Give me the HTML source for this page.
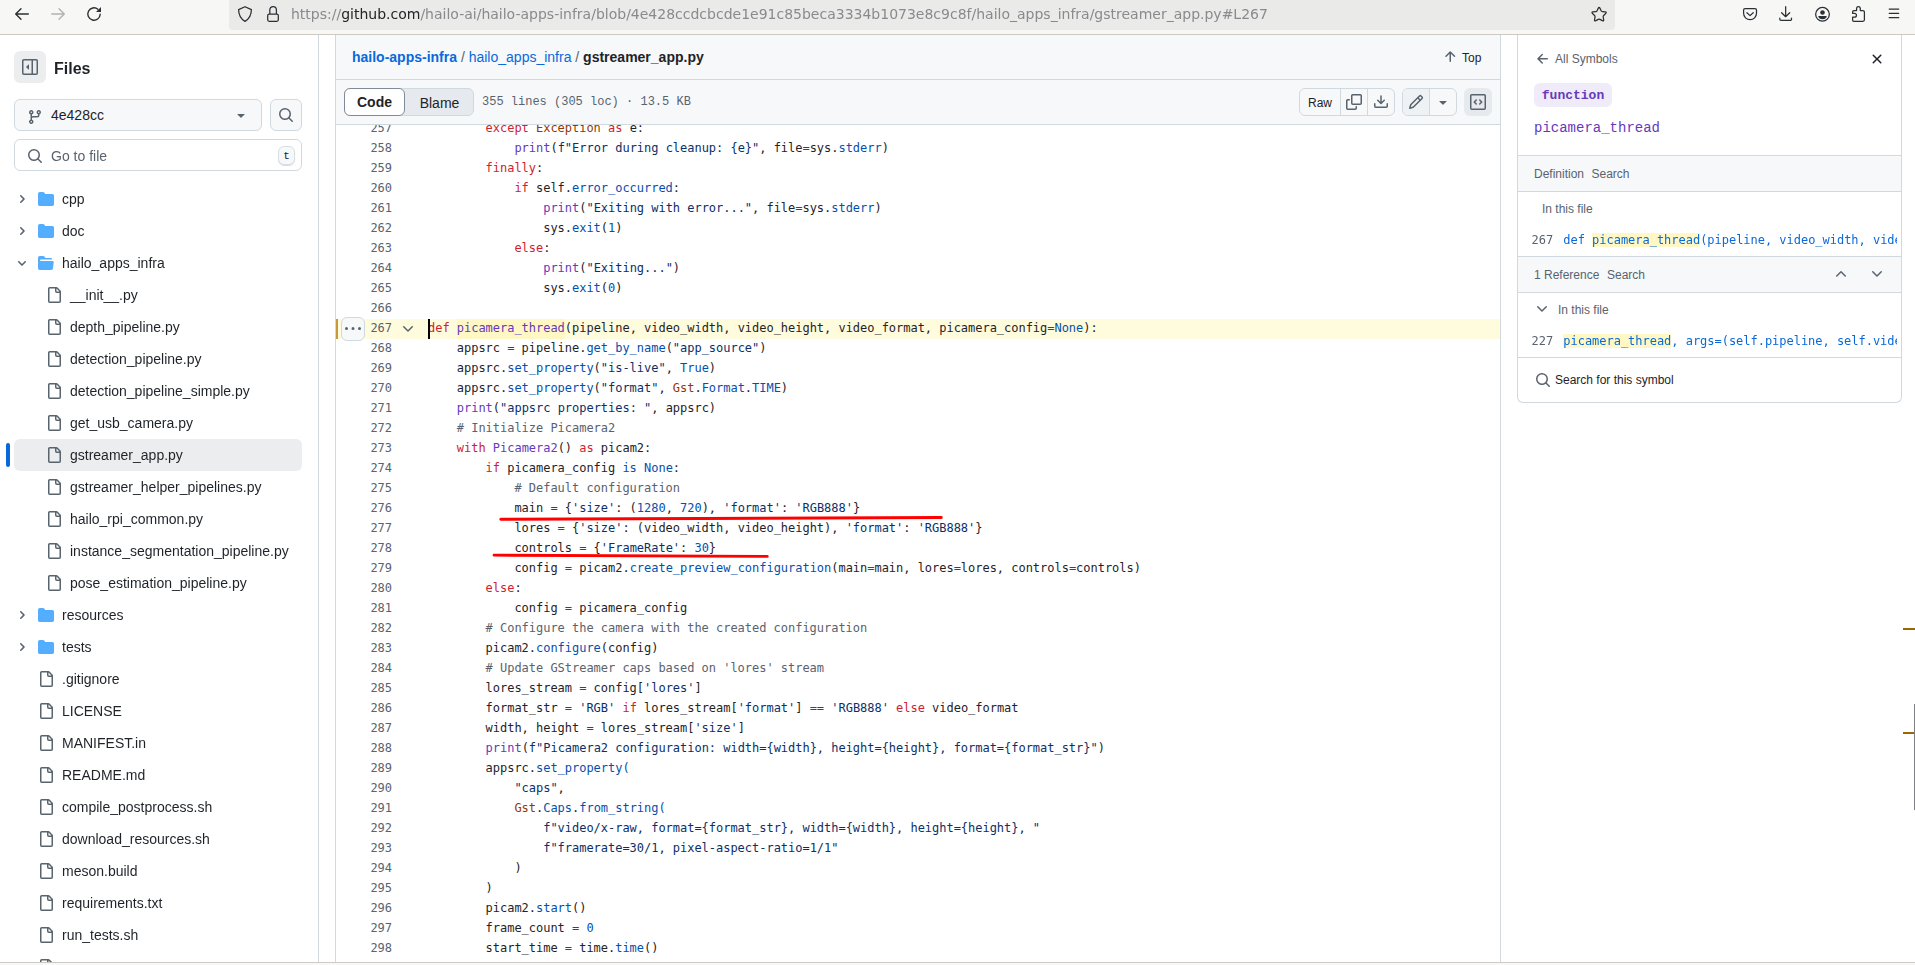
<!DOCTYPE html>
<html lang="en">
<head>
<meta charset="utf-8">
<title>hailo-apps-infra/hailo_apps_infra/gstreamer_app.py</title>
<style>
*{box-sizing:border-box;margin:0;padding:0}
html,body{width:1915px;height:965px;overflow:hidden;background:#fff}
body{position:relative;font-family:"Liberation Sans",Arial,sans-serif;font-size:14px;color:#1f2328}
.abs{position:absolute}
.gs{will-change:transform}
.ic{position:absolute;display:block;overflow:visible}
/* browser chrome */
#chrome{position:absolute;left:0;top:0;width:1915px;height:34px;background:#f7f7f5}
#chromeline{position:absolute;left:0;top:34px;width:1915px;height:1px;background:#cfc9c4}
#urlbar{position:absolute;left:229px;top:-4px;width:1386px;height:34px;border-radius:4px;background:#eaeae8}
#url{will-change:transform;position:absolute;left:290.500px;top:0;height:28px;line-height:28px;font-family:"DejaVu Sans",sans-serif;font-size:14px;color:#888a8e;white-space:nowrap;letter-spacing:-0.002px}
#url b{font-weight:normal;color:#222426}
#bottomline{position:absolute;left:0;top:962px;width:1915px;height:1px;background:#cfc9c4}
#bottomband{position:absolute;left:0;top:963px;width:1915px;height:2px;background:#f7f7f5}
/* sidebar */
#sideborder{position:absolute;left:318px;top:35px;width:1px;height:927px;background:#d1d9e0}
.tname{position:absolute;height:32px;line-height:32px;font-size:14px;color:#1f2328;white-space:nowrap}
.selrow{position:absolute;left:14px;width:288px;height:32px;border-radius:6px;background:#ecedef}
.selbar{position:absolute;left:6px;width:4px;height:24px;border-radius:6px;background:#0969da}
.btn{position:absolute;border:1px solid #d1d9e0;border-radius:6px;background:#f6f8fa}
/* main */
#main{position:absolute;left:335px;top:35px;width:1166px;height:927px;border-left:1px solid #d1d9e0;border-right:1px solid #d1d9e0;background:#fff}
#hdr1{position:absolute;left:0;top:0;width:1164px;height:45px;background:#f6f8fa;border-bottom:1px solid #d1d9e0}
#hdr2{position:absolute;left:0;top:45px;width:1164px;height:45px;background:#f6f8fa;border-bottom:1px solid #d1d9e0}
#codevp{position:absolute;left:336px;top:125px;width:1164px;height:837px;overflow:hidden;background:#fff}
.ln{position:absolute;left:0;width:1164px;height:20px;line-height:20px;font-family:"DejaVu Sans Mono",monospace;font-size:12px;white-space:pre;color:#1f2328;letter-spacing:-0.0244px}
.no{position:absolute;left:0;top:-1px;width:56px;text-align:right;color:#59636e}
.cd{position:absolute;left:92px;top:-1px;height:20px}
.hlrow{background:#fffbdd;box-shadow:inset 2px 0 0 #c69a3c}
.k{color:#cf222e}.f{color:#6639ba}.b{color:#0550ae}.s{color:#0a3069}.c{color:#59636e}.o{color:#953800}
.hl{background:#fff8c5}
.cd .hl{display:inline-block;height:20px;position:relative;top:1px;line-height:18px;vertical-align:top}
/* symbols */
#sym{position:absolute;left:1517px;top:35px;width:385px;height:368px;border:1px solid #d1d9e0;border-top:none;border-radius:0 0 6px 6px;background:#fff;overflow:hidden}
.band{position:absolute;left:0;width:383px;background:#f6f8fa;border-top:1px solid #d1d9e0;border-bottom:1px solid #d1d9e0}
.t12{position:absolute;font-size:12px;line-height:20px;height:20px;white-space:nowrap;color:#59636e}
.mono{font-family:"DejaVu Sans Mono",monospace}
.lmono{font-family:"Liberation Mono",monospace}
</style>
</head>
<body>
<!-- ===== browser chrome ===== -->
<div id="chrome">
  <div id="urlbar"></div>
  <svg class="ic" style="left:14px;top:6px;width:16px;height:16px" viewBox="0 0 16 16" fill="none" stroke="#2b3035" stroke-width="1.4" stroke-linecap="round" stroke-linejoin="round"><path d="M14.300 8.050H1.700M7 2.750 1.700 8.050 7 13.350"/></svg>
  <svg class="ic" style="left:50px;top:6px;width:16px;height:16px" viewBox="0 0 16 16" fill="none" stroke="#b3b3b1" stroke-width="1.4" stroke-linecap="round" stroke-linejoin="round"><path d="M1.700 8.050h12.600M9 2.750 14.300 8.050 9 13.350"/></svg>
  <svg class="ic" style="left:86px;top:6px;width:16px;height:16px" viewBox="0 0 16 16" fill="none" stroke="#2b3035" stroke-width="1.4" stroke-linecap="round"><path d="M14.2 8.3a6.2 6.2 0 1 1-2.3-5.1"/><path d="M15 1v5h-5z" fill="#2b3035" stroke="none"/></svg>
  <svg class="ic" style="left:237px;top:6px;width:16px;height:16px" viewBox="0 0 16 16" fill="none" stroke="#2b3035" stroke-width="1.250" stroke-linejoin="round"><path d="M8 .700 14.400 3.600C14.400 8.800 12.200 13 8 15.400 3.800 13 1.600 8.800 1.600 3.600Z"/></svg>
  <svg class="ic" style="left:265px;top:6px;width:16px;height:16px" viewBox="0 0 16 16" fill="none" stroke="#2b3035" stroke-width="1.250" stroke-linejoin="round"><rect x="2.700" y="8.100" width="10.600" height="7.200" rx="1.500"/><path d="M4.800 8V3.900a3.300 3.300 0 0 1 6.600 0V8"/></svg>
  <div id="url">https://<b>github.com</b>/hailo-ai/hailo-apps-infra/blob/4e428ccdcbcde1e91c85beca3334b1073e8c9c8f/hailo_apps_infra/gstreamer_app.py#L267</div>
  <svg class="ic" style="left:1590px;top:5px;width:18px;height:18px" viewBox="0 0 18 18" fill="none" stroke="#2b3035" stroke-width="1.250" stroke-linejoin="round"><path d="M8.32 3.12Q9.10 1.50 9.88 3.12L11.12 5.67Q11.51 6.48 12.40 6.61L15.21 6.99Q16.99 7.24 15.69 8.48L13.65 10.44Q13.00 11.07 13.16 11.95L13.66 14.74Q13.98 16.51 12.39 15.66L9.89 14.33Q9.10 13.90 8.31 14.33L5.81 15.66Q4.22 16.51 4.54 14.74L5.04 11.95Q5.20 11.07 4.55 10.44L2.51 8.48Q1.21 7.24 2.99 6.99L5.80 6.61Q6.69 6.48 7.08 5.67Z"/></svg>
  <svg class="ic" style="left:1742px;top:6px;width:16px;height:16px" viewBox="0 0 16 16" fill="none" stroke="#2b3035" stroke-width="1.250" stroke-linecap="round" stroke-linejoin="round"><path d="M3.100 2.600h9.900a1.500 1.500 0 0 1 1.500 1.500v3.200a6.450 6.450 0 0 1-12.900 0V4.100a1.500 1.500 0 0 1 1.500-1.500Z"/><path d="M4.900 6.700 8.050 9.600 11.200 6.700"/></svg>
  <svg class="ic" style="left:1778px;top:6px;width:16px;height:16px" viewBox="0 0 16 16" fill="none" stroke="#2b3035" stroke-width="1.250" stroke-linecap="round" stroke-linejoin="round"><path d="M7.650 .700v10M3.600 6.700 7.650 10.700 11.700 6.700M1.800 12.100v1.100a1.200 1.200 0 0 0 1.200 1.200h9.300a1.200 1.200 0 0 0 1.200-1.200v-1.100"/></svg>
  <svg class="ic" style="left:1814px;top:6px;width:17px;height:17px" viewBox="0 0 17 17" fill="none" stroke="#2b3035" stroke-width="1.250"><circle cx="8.500" cy="8.300" r="6.850"/><circle cx="8.500" cy="6.450" r="2.300" fill="#2b3035" stroke="none"/><path d="M4.300 10.100h8.400a4.200 3.100 0 0 1-8.400 0Z" fill="#2b3035" stroke="none"/></svg>
  <svg class="ic" style="left:1845px;top:2px;width:28px;height:24px" viewBox="0 0 28 24" fill="none" stroke="#2b3035" stroke-width="1.250" stroke-linejoin="round"><path d="M11.570 8.600V6.370A1.870 1.870 0 0 1 15.300 6.370V8.600H17.900A1.500 1.500 0 0 1 19.400 10.100V17.800A1.500 1.500 0 0 1 17.900 19.300H8.900A1.300 1.300 0 0 1 7.600 18V15.200H9.500A1.950 1.950 0 0 0 9.500 11.300H7.600V9.900A1.300 1.300 0 0 1 8.900 8.600Z"/></svg>
  <svg class="ic" style="left:1886px;top:6px;width:16px;height:16px" viewBox="0 0 16 16" fill="none" stroke="#2b3035" stroke-width="1.250" stroke-linecap="round"><path d="M3.200 3h9.500M3.200 7.350h9.500M3.200 11.650h9.500"/></svg>
</div>
<div id="chromeline"></div>

<!-- ===== file tree sidebar ===== -->
<div id="sideborder"></div>
<div class="abs" style="left:14px;top:51px;width:32px;height:32px;border-radius:6px;background:#ecedef"></div>
<svg class="ic" style="left:22px;top:59px;width:16px;height:16px;fill:#59636e;" viewBox="0 0 16 16"><path d="m4.177 7.823 2.396-2.396A.25.25 0 0 1 7 5.604v4.792a.25.25 0 0 1-.427.177L4.177 8.177a.25.25 0 0 1 0-.354Z"/><path d="M0 1.75C0 .784.784 0 1.75 0h12.5C15.216 0 16 .784 16 1.75v12.5A1.75 1.75 0 0 1 14.25 16H1.75A1.75 1.75 0 0 1 0 14.25Zm1.75-.25a.25.25 0 0 0-.25.25v12.5c0 .138.112.25.25.25H9.5v-13Zm12.5 13a.25.25 0 0 0 .25-.25V1.75a.25.25 0 0 0-.25-.25H11v13Z"/></svg>
<div class="abs gs" style="left:54px;top:57px;height:24px;line-height:24px;font-size:16px;font-weight:bold;color:#1f2328">Files</div>
<div class="btn" style="left:14px;top:99px;width:248px;height:32px"></div>
<svg class="ic" style="left:27px;top:108.500px;width:16px;height:16px;fill:#59636e;" viewBox="0 0 16 16"><path d="M9.5 3.25a2.25 2.25 0 1 1 3 2.122V6A2.5 2.5 0 0 1 10 8.5H6a1 1 0 0 0-1 1v1.128a2.251 2.251 0 1 1-1.5 0V5.372a2.25 2.25 0 1 1 1.5 0v1.836A2.493 2.493 0 0 1 6 7h4a1 1 0 0 0 1-1v-.628A2.25 2.25 0 0 1 9.5 3.25Zm-6 0a.75.75 0 1 0 1.5 0 .75.75 0 0 0-1.5 0Zm8.25-.75a.75.75 0 1 0 0 1.5.75.75 0 0 0 0-1.5ZM4.25 12a.75.75 0 1 0 0 1.5.75.75 0 0 0 0-1.5Z"/></svg>
<div class="abs" style="left:51px;top:99px;height:32px;line-height:32px;font-size:14px;color:#1f2328">4e428cc</div>
<svg class="ic" style="left:233px;top:107px;width:16px;height:16px;fill:#59636e;" viewBox="0 0 16 16"><path d="m4.427 7.427 3.396 3.396a.25.25 0 0 0 .354 0l3.396-3.396A.25.25 0 0 0 11.396 7H4.604a.25.25 0 0 0-.177.427Z"/></svg>
<div class="btn" style="left:270px;top:99px;width:32px;height:32px"></div>
<svg class="ic" style="left:278px;top:107px;width:16px;height:16px;fill:#59636e;" viewBox="0 0 16 16"><path d="M10.68 11.74a6 6 0 0 1-7.922-8.982 6 6 0 0 1 8.982 7.922l3.04 3.04a.749.749 0 0 1-.326 1.275.749.749 0 0 1-.734-.215ZM11.5 7a4.499 4.499 0 1 0-8.997 0A4.499 4.499 0 0 0 11.5 7Z"/></svg>
<div class="abs" style="left:14px;top:139px;width:288px;height:32px;border:1px solid #d1d9e0;border-radius:6px;background:#fff"></div>
<svg class="ic" style="left:27px;top:148px;width:16px;height:16px;fill:#59636e;" viewBox="0 0 16 16"><path d="M10.68 11.74a6 6 0 0 1-7.922-8.982 6 6 0 0 1 8.982 7.922l3.04 3.04a.749.749 0 0 1-.326 1.275.749.749 0 0 1-.734-.215ZM11.5 7a4.499 4.499 0 1 0-8.997 0A4.499 4.499 0 0 0 11.5 7Z"/></svg>
<div class="abs gs" style="left:51px;top:140px;height:32px;line-height:32px;font-size:14px;color:#59636e">Go to file</div>
<div class="abs lmono" style="left:278px;top:146px;width:17px;height:20px;border:1px solid #d8dee4;border-radius:6px;background:#f6f8fa;box-shadow:inset 0 -1px 0 #d8dee4;font-size:11px;line-height:18px;text-align:center;color:#1f2328">t</div>
<div class="abs gs" style="left:0;top:175px;width:318px;height:787px;overflow:hidden"><div class="abs" style="left:0;top:-175px;width:318px;height:965px">
<svg class="ic" style="left:16px;top:193px;width:12px;height:12px;fill:#59636e;" viewBox="0 0 12 12"><path d="M4.7 10c-.2 0-.4-.1-.5-.2-.3-.3-.3-.8 0-1.1L6.9 6 4.2 3.3c-.3-.3-.3-.8 0-1.1.3-.3.8-.3 1.1 0l3.3 3.2c.3.3.3.8 0 1.1L5.3 9.7c-.2.2-.4.3-.6.3Z"/></svg><svg class="ic" style="left:38px;top:191px;width:16px;height:16px;fill:#54aeff;" viewBox="0 0 16 16"><path d="M1.75 1A1.75 1.75 0 0 0 0 2.75v10.5C0 14.216.784 15 1.75 15h12.5A1.75 1.75 0 0 0 16 13.25v-8.5A1.75 1.75 0 0 0 14.25 3H7.5a.25.25 0 0 1-.2-.1l-.9-1.2C6.07 1.26 5.55 1 5 1H1.75Z"/></svg><div class="tname" style="left:62px;top:183px">cpp</div>
<svg class="ic" style="left:16px;top:225px;width:12px;height:12px;fill:#59636e;" viewBox="0 0 12 12"><path d="M4.7 10c-.2 0-.4-.1-.5-.2-.3-.3-.3-.8 0-1.1L6.9 6 4.2 3.3c-.3-.3-.3-.8 0-1.1.3-.3.8-.3 1.1 0l3.3 3.2c.3.3.3.8 0 1.1L5.3 9.7c-.2.2-.4.3-.6.3Z"/></svg><svg class="ic" style="left:38px;top:223px;width:16px;height:16px;fill:#54aeff;" viewBox="0 0 16 16"><path d="M1.75 1A1.75 1.75 0 0 0 0 2.75v10.5C0 14.216.784 15 1.75 15h12.5A1.75 1.75 0 0 0 16 13.25v-8.5A1.75 1.75 0 0 0 14.25 3H7.5a.25.25 0 0 1-.2-.1l-.9-1.2C6.07 1.26 5.55 1 5 1H1.75Z"/></svg><div class="tname" style="left:62px;top:215px">doc</div>
<svg class="ic" style="left:16px;top:257px;width:12px;height:12px;fill:#59636e;" viewBox="0 0 12 12"><path d="M6 8.825c-.2 0-.4-.1-.5-.2l-3.3-3.3c-.3-.3-.3-.8 0-1.1.3-.3.8-.3 1.1 0l2.7 2.7 2.7-2.7c.3-.3.8-.3 1.1 0 .3.3.3.8 0 1.1l-3.2 3.2c-.2.2-.4.3-.6.3Z"/></svg><svg class="ic" style="left:38px;top:255px;width:16px;height:16px;fill:#54aeff;" viewBox="0 0 16 16"><path d="M.513 1.513A1.75 1.75 0 0 1 1.75 1h3.5c.55 0 1.07.26 1.4.7l.9 1.2a.25.25 0 0 0 .2.1H13a1 1 0 0 1 1 1v.5H2.75a.75.75 0 0 0 0 1.5h11.978a1 1 0 0 1 .994 1.117L15 13.25A1.75 1.75 0 0 1 13.25 15H1.75A1.75 1.75 0 0 1 0 13.25V2.75c0-.464.184-.91.513-1.237Z"/></svg><div class="tname" style="left:62px;top:247px">hailo_apps_infra</div>
<svg class="ic" style="left:46px;top:287px;width:16px;height:16px;fill:#59636e;" viewBox="0 0 16 16"><path d="M2 1.75C2 .784 2.784 0 3.75 0h6.586c.464 0 .909.184 1.237.513l2.914 2.914c.329.328.513.773.513 1.237v9.586A1.75 1.75 0 0 1 13.25 16h-9.5A1.75 1.75 0 0 1 2 14.25Zm1.75-.25a.25.25 0 0 0-.25.25v12.5c0 .138.112.25.25.25h9.5a.25.25 0 0 0 .25-.25V6h-2.75A1.75 1.75 0 0 1 9 4.25V1.5Zm6.75.062V4.25c0 .138.112.25.25.25h2.688l-.011-.013-2.914-2.914-.013-.011Z"/></svg><div class="tname" style="left:70px;top:279px">__init__.py</div>
<svg class="ic" style="left:46px;top:319px;width:16px;height:16px;fill:#59636e;" viewBox="0 0 16 16"><path d="M2 1.75C2 .784 2.784 0 3.75 0h6.586c.464 0 .909.184 1.237.513l2.914 2.914c.329.328.513.773.513 1.237v9.586A1.75 1.75 0 0 1 13.25 16h-9.5A1.75 1.75 0 0 1 2 14.25Zm1.75-.25a.25.25 0 0 0-.25.25v12.5c0 .138.112.25.25.25h9.5a.25.25 0 0 0 .25-.25V6h-2.75A1.75 1.75 0 0 1 9 4.25V1.5Zm6.75.062V4.25c0 .138.112.25.25.25h2.688l-.011-.013-2.914-2.914-.013-.011Z"/></svg><div class="tname" style="left:70px;top:311px">depth_pipeline.py</div>
<svg class="ic" style="left:46px;top:351px;width:16px;height:16px;fill:#59636e;" viewBox="0 0 16 16"><path d="M2 1.75C2 .784 2.784 0 3.75 0h6.586c.464 0 .909.184 1.237.513l2.914 2.914c.329.328.513.773.513 1.237v9.586A1.75 1.75 0 0 1 13.25 16h-9.5A1.75 1.75 0 0 1 2 14.25Zm1.75-.25a.25.25 0 0 0-.25.25v12.5c0 .138.112.25.25.25h9.5a.25.25 0 0 0 .25-.25V6h-2.75A1.75 1.75 0 0 1 9 4.25V1.5Zm6.75.062V4.25c0 .138.112.25.25.25h2.688l-.011-.013-2.914-2.914-.013-.011Z"/></svg><div class="tname" style="left:70px;top:343px">detection_pipeline.py</div>
<svg class="ic" style="left:46px;top:383px;width:16px;height:16px;fill:#59636e;" viewBox="0 0 16 16"><path d="M2 1.75C2 .784 2.784 0 3.75 0h6.586c.464 0 .909.184 1.237.513l2.914 2.914c.329.328.513.773.513 1.237v9.586A1.75 1.75 0 0 1 13.25 16h-9.5A1.75 1.75 0 0 1 2 14.25Zm1.75-.25a.25.25 0 0 0-.25.25v12.5c0 .138.112.25.25.25h9.5a.25.25 0 0 0 .25-.25V6h-2.75A1.75 1.75 0 0 1 9 4.25V1.5Zm6.75.062V4.25c0 .138.112.25.25.25h2.688l-.011-.013-2.914-2.914-.013-.011Z"/></svg><div class="tname" style="left:70px;top:375px">detection_pipeline_simple.py</div>
<svg class="ic" style="left:46px;top:415px;width:16px;height:16px;fill:#59636e;" viewBox="0 0 16 16"><path d="M2 1.75C2 .784 2.784 0 3.75 0h6.586c.464 0 .909.184 1.237.513l2.914 2.914c.329.328.513.773.513 1.237v9.586A1.75 1.75 0 0 1 13.25 16h-9.5A1.75 1.75 0 0 1 2 14.25Zm1.75-.25a.25.25 0 0 0-.25.25v12.5c0 .138.112.25.25.25h9.5a.25.25 0 0 0 .25-.25V6h-2.75A1.75 1.75 0 0 1 9 4.25V1.5Zm6.75.062V4.25c0 .138.112.25.25.25h2.688l-.011-.013-2.914-2.914-.013-.011Z"/></svg><div class="tname" style="left:70px;top:407px">get_usb_camera.py</div>
<div class="selrow" style="top:439px"></div><div class="selbar" style="top:443px"></div><svg class="ic" style="left:46px;top:447px;width:16px;height:16px;fill:#59636e;" viewBox="0 0 16 16"><path d="M2 1.75C2 .784 2.784 0 3.75 0h6.586c.464 0 .909.184 1.237.513l2.914 2.914c.329.328.513.773.513 1.237v9.586A1.75 1.75 0 0 1 13.25 16h-9.5A1.75 1.75 0 0 1 2 14.25Zm1.75-.25a.25.25 0 0 0-.25.25v12.5c0 .138.112.25.25.25h9.5a.25.25 0 0 0 .25-.25V6h-2.75A1.75 1.75 0 0 1 9 4.25V1.5Zm6.75.062V4.25c0 .138.112.25.25.25h2.688l-.011-.013-2.914-2.914-.013-.011Z"/></svg><div class="tname" style="left:70px;top:439px">gstreamer_app.py</div>
<svg class="ic" style="left:46px;top:479px;width:16px;height:16px;fill:#59636e;" viewBox="0 0 16 16"><path d="M2 1.75C2 .784 2.784 0 3.75 0h6.586c.464 0 .909.184 1.237.513l2.914 2.914c.329.328.513.773.513 1.237v9.586A1.75 1.75 0 0 1 13.25 16h-9.5A1.75 1.75 0 0 1 2 14.25Zm1.75-.25a.25.25 0 0 0-.25.25v12.5c0 .138.112.25.25.25h9.5a.25.25 0 0 0 .25-.25V6h-2.75A1.75 1.75 0 0 1 9 4.25V1.5Zm6.75.062V4.25c0 .138.112.25.25.25h2.688l-.011-.013-2.914-2.914-.013-.011Z"/></svg><div class="tname" style="left:70px;top:471px">gstreamer_helper_pipelines.py</div>
<svg class="ic" style="left:46px;top:511px;width:16px;height:16px;fill:#59636e;" viewBox="0 0 16 16"><path d="M2 1.75C2 .784 2.784 0 3.75 0h6.586c.464 0 .909.184 1.237.513l2.914 2.914c.329.328.513.773.513 1.237v9.586A1.75 1.75 0 0 1 13.25 16h-9.5A1.75 1.75 0 0 1 2 14.25Zm1.75-.25a.25.25 0 0 0-.25.25v12.5c0 .138.112.25.25.25h9.5a.25.25 0 0 0 .25-.25V6h-2.75A1.75 1.75 0 0 1 9 4.25V1.5Zm6.75.062V4.25c0 .138.112.25.25.25h2.688l-.011-.013-2.914-2.914-.013-.011Z"/></svg><div class="tname" style="left:70px;top:503px">hailo_rpi_common.py</div>
<svg class="ic" style="left:46px;top:543px;width:16px;height:16px;fill:#59636e;" viewBox="0 0 16 16"><path d="M2 1.75C2 .784 2.784 0 3.75 0h6.586c.464 0 .909.184 1.237.513l2.914 2.914c.329.328.513.773.513 1.237v9.586A1.75 1.75 0 0 1 13.25 16h-9.5A1.75 1.75 0 0 1 2 14.25Zm1.75-.25a.25.25 0 0 0-.25.25v12.5c0 .138.112.25.25.25h9.5a.25.25 0 0 0 .25-.25V6h-2.75A1.75 1.75 0 0 1 9 4.25V1.5Zm6.75.062V4.25c0 .138.112.25.25.25h2.688l-.011-.013-2.914-2.914-.013-.011Z"/></svg><div class="tname" style="left:70px;top:535px">instance_segmentation_pipeline.py</div>
<svg class="ic" style="left:46px;top:575px;width:16px;height:16px;fill:#59636e;" viewBox="0 0 16 16"><path d="M2 1.75C2 .784 2.784 0 3.75 0h6.586c.464 0 .909.184 1.237.513l2.914 2.914c.329.328.513.773.513 1.237v9.586A1.75 1.75 0 0 1 13.25 16h-9.5A1.75 1.75 0 0 1 2 14.25Zm1.75-.25a.25.25 0 0 0-.25.25v12.5c0 .138.112.25.25.25h9.5a.25.25 0 0 0 .25-.25V6h-2.75A1.75 1.75 0 0 1 9 4.25V1.5Zm6.75.062V4.25c0 .138.112.25.25.25h2.688l-.011-.013-2.914-2.914-.013-.011Z"/></svg><div class="tname" style="left:70px;top:567px">pose_estimation_pipeline.py</div>
<svg class="ic" style="left:16px;top:609px;width:12px;height:12px;fill:#59636e;" viewBox="0 0 12 12"><path d="M4.7 10c-.2 0-.4-.1-.5-.2-.3-.3-.3-.8 0-1.1L6.9 6 4.2 3.3c-.3-.3-.3-.8 0-1.1.3-.3.8-.3 1.1 0l3.3 3.2c.3.3.3.8 0 1.1L5.3 9.7c-.2.2-.4.3-.6.3Z"/></svg><svg class="ic" style="left:38px;top:607px;width:16px;height:16px;fill:#54aeff;" viewBox="0 0 16 16"><path d="M1.75 1A1.75 1.75 0 0 0 0 2.75v10.5C0 14.216.784 15 1.75 15h12.5A1.75 1.75 0 0 0 16 13.25v-8.5A1.75 1.75 0 0 0 14.25 3H7.5a.25.25 0 0 1-.2-.1l-.9-1.2C6.07 1.26 5.55 1 5 1H1.75Z"/></svg><div class="tname" style="left:62px;top:599px">resources</div>
<svg class="ic" style="left:16px;top:641px;width:12px;height:12px;fill:#59636e;" viewBox="0 0 12 12"><path d="M4.7 10c-.2 0-.4-.1-.5-.2-.3-.3-.3-.8 0-1.1L6.9 6 4.2 3.3c-.3-.3-.3-.8 0-1.1.3-.3.8-.3 1.1 0l3.3 3.2c.3.3.3.8 0 1.1L5.3 9.7c-.2.2-.4.3-.6.3Z"/></svg><svg class="ic" style="left:38px;top:639px;width:16px;height:16px;fill:#54aeff;" viewBox="0 0 16 16"><path d="M1.75 1A1.75 1.75 0 0 0 0 2.75v10.5C0 14.216.784 15 1.75 15h12.5A1.75 1.75 0 0 0 16 13.25v-8.5A1.75 1.75 0 0 0 14.25 3H7.5a.25.25 0 0 1-.2-.1l-.9-1.2C6.07 1.26 5.55 1 5 1H1.75Z"/></svg><div class="tname" style="left:62px;top:631px">tests</div>
<svg class="ic" style="left:38px;top:671px;width:16px;height:16px;fill:#59636e;" viewBox="0 0 16 16"><path d="M2 1.75C2 .784 2.784 0 3.75 0h6.586c.464 0 .909.184 1.237.513l2.914 2.914c.329.328.513.773.513 1.237v9.586A1.75 1.75 0 0 1 13.25 16h-9.5A1.75 1.75 0 0 1 2 14.25Zm1.75-.25a.25.25 0 0 0-.25.25v12.5c0 .138.112.25.25.25h9.5a.25.25 0 0 0 .25-.25V6h-2.75A1.75 1.75 0 0 1 9 4.25V1.5Zm6.75.062V4.25c0 .138.112.25.25.25h2.688l-.011-.013-2.914-2.914-.013-.011Z"/></svg><div class="tname" style="left:62px;top:663px">.gitignore</div>
<svg class="ic" style="left:38px;top:703px;width:16px;height:16px;fill:#59636e;" viewBox="0 0 16 16"><path d="M2 1.75C2 .784 2.784 0 3.75 0h6.586c.464 0 .909.184 1.237.513l2.914 2.914c.329.328.513.773.513 1.237v9.586A1.75 1.75 0 0 1 13.25 16h-9.5A1.75 1.75 0 0 1 2 14.25Zm1.75-.25a.25.25 0 0 0-.25.25v12.5c0 .138.112.25.25.25h9.5a.25.25 0 0 0 .25-.25V6h-2.75A1.75 1.75 0 0 1 9 4.25V1.5Zm6.75.062V4.25c0 .138.112.25.25.25h2.688l-.011-.013-2.914-2.914-.013-.011Z"/></svg><div class="tname" style="left:62px;top:695px">LICENSE</div>
<svg class="ic" style="left:38px;top:735px;width:16px;height:16px;fill:#59636e;" viewBox="0 0 16 16"><path d="M2 1.75C2 .784 2.784 0 3.75 0h6.586c.464 0 .909.184 1.237.513l2.914 2.914c.329.328.513.773.513 1.237v9.586A1.75 1.75 0 0 1 13.25 16h-9.5A1.75 1.75 0 0 1 2 14.25Zm1.75-.25a.25.25 0 0 0-.25.25v12.5c0 .138.112.25.25.25h9.5a.25.25 0 0 0 .25-.25V6h-2.75A1.75 1.75 0 0 1 9 4.25V1.5Zm6.75.062V4.25c0 .138.112.25.25.25h2.688l-.011-.013-2.914-2.914-.013-.011Z"/></svg><div class="tname" style="left:62px;top:727px">MANIFEST.in</div>
<svg class="ic" style="left:38px;top:767px;width:16px;height:16px;fill:#59636e;" viewBox="0 0 16 16"><path d="M2 1.75C2 .784 2.784 0 3.75 0h6.586c.464 0 .909.184 1.237.513l2.914 2.914c.329.328.513.773.513 1.237v9.586A1.75 1.75 0 0 1 13.25 16h-9.5A1.75 1.75 0 0 1 2 14.25Zm1.75-.25a.25.25 0 0 0-.25.25v12.5c0 .138.112.25.25.25h9.5a.25.25 0 0 0 .25-.25V6h-2.75A1.75 1.75 0 0 1 9 4.25V1.5Zm6.75.062V4.25c0 .138.112.25.25.25h2.688l-.011-.013-2.914-2.914-.013-.011Z"/></svg><div class="tname" style="left:62px;top:759px">README.md</div>
<svg class="ic" style="left:38px;top:799px;width:16px;height:16px;fill:#59636e;" viewBox="0 0 16 16"><path d="M2 1.75C2 .784 2.784 0 3.75 0h6.586c.464 0 .909.184 1.237.513l2.914 2.914c.329.328.513.773.513 1.237v9.586A1.75 1.75 0 0 1 13.25 16h-9.5A1.75 1.75 0 0 1 2 14.25Zm1.75-.25a.25.25 0 0 0-.25.25v12.5c0 .138.112.25.25.25h9.5a.25.25 0 0 0 .25-.25V6h-2.75A1.75 1.75 0 0 1 9 4.25V1.5Zm6.75.062V4.25c0 .138.112.25.25.25h2.688l-.011-.013-2.914-2.914-.013-.011Z"/></svg><div class="tname" style="left:62px;top:791px">compile_postprocess.sh</div>
<svg class="ic" style="left:38px;top:831px;width:16px;height:16px;fill:#59636e;" viewBox="0 0 16 16"><path d="M2 1.75C2 .784 2.784 0 3.75 0h6.586c.464 0 .909.184 1.237.513l2.914 2.914c.329.328.513.773.513 1.237v9.586A1.75 1.75 0 0 1 13.25 16h-9.5A1.75 1.75 0 0 1 2 14.25Zm1.75-.25a.25.25 0 0 0-.25.25v12.5c0 .138.112.25.25.25h9.5a.25.25 0 0 0 .25-.25V6h-2.75A1.75 1.75 0 0 1 9 4.25V1.5Zm6.75.062V4.25c0 .138.112.25.25.25h2.688l-.011-.013-2.914-2.914-.013-.011Z"/></svg><div class="tname" style="left:62px;top:823px">download_resources.sh</div>
<svg class="ic" style="left:38px;top:863px;width:16px;height:16px;fill:#59636e;" viewBox="0 0 16 16"><path d="M2 1.75C2 .784 2.784 0 3.75 0h6.586c.464 0 .909.184 1.237.513l2.914 2.914c.329.328.513.773.513 1.237v9.586A1.75 1.75 0 0 1 13.25 16h-9.5A1.75 1.75 0 0 1 2 14.25Zm1.75-.25a.25.25 0 0 0-.25.25v12.5c0 .138.112.25.25.25h9.5a.25.25 0 0 0 .25-.25V6h-2.75A1.75 1.75 0 0 1 9 4.25V1.5Zm6.75.062V4.25c0 .138.112.25.25.25h2.688l-.011-.013-2.914-2.914-.013-.011Z"/></svg><div class="tname" style="left:62px;top:855px">meson.build</div>
<svg class="ic" style="left:38px;top:895px;width:16px;height:16px;fill:#59636e;" viewBox="0 0 16 16"><path d="M2 1.75C2 .784 2.784 0 3.75 0h6.586c.464 0 .909.184 1.237.513l2.914 2.914c.329.328.513.773.513 1.237v9.586A1.75 1.75 0 0 1 13.25 16h-9.5A1.75 1.75 0 0 1 2 14.25Zm1.75-.25a.25.25 0 0 0-.25.25v12.5c0 .138.112.25.25.25h9.5a.25.25 0 0 0 .25-.25V6h-2.75A1.75 1.75 0 0 1 9 4.25V1.5Zm6.75.062V4.25c0 .138.112.25.25.25h2.688l-.011-.013-2.914-2.914-.013-.011Z"/></svg><div class="tname" style="left:62px;top:887px">requirements.txt</div>
<svg class="ic" style="left:38px;top:927px;width:16px;height:16px;fill:#59636e;" viewBox="0 0 16 16"><path d="M2 1.75C2 .784 2.784 0 3.75 0h6.586c.464 0 .909.184 1.237.513l2.914 2.914c.329.328.513.773.513 1.237v9.586A1.75 1.75 0 0 1 13.25 16h-9.5A1.75 1.75 0 0 1 2 14.25Zm1.75-.25a.25.25 0 0 0-.25.25v12.5c0 .138.112.25.25.25h9.5a.25.25 0 0 0 .25-.25V6h-2.75A1.75 1.75 0 0 1 9 4.25V1.5Zm6.75.062V4.25c0 .138.112.25.25.25h2.688l-.011-.013-2.914-2.914-.013-.011Z"/></svg><div class="tname" style="left:62px;top:919px">run_tests.sh</div>
<svg class="ic" style="left:38px;top:959px;width:16px;height:16px;fill:#59636e;" viewBox="0 0 16 16"><path d="M2 1.75C2 .784 2.784 0 3.75 0h6.586c.464 0 .909.184 1.237.513l2.914 2.914c.329.328.513.773.513 1.237v9.586A1.75 1.75 0 0 1 13.25 16h-9.5A1.75 1.75 0 0 1 2 14.25Zm1.75-.25a.25.25 0 0 0-.25.25v12.5c0 .138.112.25.25.25h9.5a.25.25 0 0 0 .25-.25V6h-2.75A1.75 1.75 0 0 1 9 4.25V1.5Zm6.75.062V4.25c0 .138.112.25.25.25h2.688l-.011-.013-2.914-2.914-.013-.011Z"/></svg><div class="tname" style="left:62px;top:951px">setup.py</div>
</div></div>

<!-- ===== main blob view ===== -->
<div id="main">
  <div id="hdr1"></div>
  <div id="hdr2"></div>
</div>
<div class="abs" style="left:352px;top:47px;height:21px;line-height:21px;font-size:14px;white-space:nowrap;color:#59636e"><span style="font-weight:bold;color:#0969da">hailo-apps-infra</span> / <span style="color:#0969da">hailo_apps_infra</span> / <span style="font-weight:bold;color:#1f2328">gstreamer_app.py</span></div>
<svg class="ic" style="left:1441.700px;top:48.800px;width:16px;height:16px;fill:#59636e;" viewBox="0 0 16 16"><path d="M3.47 7.78a.75.75 0 0 1 0-1.06l4.25-4.25a.75.75 0 0 1 1.06 0l4.25 4.25a.751.751 0 0 1-.018 1.042.751.751 0 0 1-1.042.018L9 4.81v7.44a.75.75 0 0 1-1.5 0V4.81L4.53 7.78a.75.75 0 0 1-1.06 0Z"/></svg>
<div class="abs" style="left:1462px;top:48px;height:20px;line-height:20px;font-size:12px;color:#1f2328">Top</div>
<!-- segmented control -->
<div class="abs" style="left:344px;top:88px;width:130px;height:28px;border-radius:6px;background:#e6eaef;border:1px solid #d1d9e0"></div>
<div class="abs" style="left:344px;top:88px;width:61px;height:28px;border-radius:6px;background:#fff;border:1px solid #818b98"></div>
<div class="abs" style="left:344px;top:88px;width:61px;height:28px;line-height:28px;text-align:center;font-size:14px;font-weight:bold;color:#1f2328">Code</div>
<div class="abs" style="left:405px;top:89px;width:69px;height:28px;line-height:28px;text-align:center;font-size:14px;color:#1f2328">Blame</div>
<div class="abs lmono" style="left:482px;top:92px;height:20px;line-height:20px;font-size:12px;color:#59636e;white-space:pre">355 lines (305 loc) · 13.5 KB</div>
<!-- raw group -->
<div class="btn" style="left:1299px;top:88px;width:96px;height:28px"></div>
<div class="abs" style="left:1340px;top:89px;width:1px;height:26px;background:#d1d9e0"></div>
<div class="abs" style="left:1367px;top:89px;width:1px;height:26px;background:#d1d9e0"></div>
<div class="abs" style="left:1299px;top:89px;width:42px;height:28px;line-height:28px;text-align:center;font-size:12px;color:#1f2328">Raw</div>
<svg class="ic" style="left:1346px;top:94px;width:16px;height:16px;fill:#59636e;" viewBox="0 0 16 16"><path d="M0 6.75C0 5.784.784 5 1.75 5h1.5a.75.75 0 0 1 0 1.5h-1.5a.25.25 0 0 0-.25.25v7.5c0 .138.112.25.25.25h7.5a.25.25 0 0 0 .25-.25v-1.5a.75.75 0 0 1 1.5 0v1.5A1.75 1.75 0 0 1 9.25 16h-7.5A1.75 1.75 0 0 1 0 14.25Z"/><path d="M5 1.75C5 .784 5.784 0 6.75 0h7.5C15.216 0 16 .784 16 1.75v7.5A1.75 1.75 0 0 1 14.25 11h-7.5A1.75 1.75 0 0 1 5 9.25Zm1.75-.25a.25.25 0 0 0-.25.25v7.5c0 .138.112.25.25.25h7.5a.25.25 0 0 0 .25-.25v-7.5a.25.25 0 0 0-.25-.25Z"/></svg>
<svg class="ic" style="left:1373px;top:94px;width:16px;height:16px;fill:#59636e;" viewBox="0 0 16 16"><path d="M2.75 14A1.75 1.75 0 0 1 1 12.25v-2.5a.75.75 0 0 1 1.5 0v2.5c0 .138.112.25.25.25h10.5a.25.25 0 0 0 .25-.25v-2.5a.75.75 0 0 1 1.5 0v2.5A1.75 1.75 0 0 1 13.25 14Z"/><path d="M7.25 7.689V2a.75.75 0 0 1 1.5 0v5.689l1.97-1.969a.749.749 0 1 1 1.06 1.06l-3.25 3.25a.749.749 0 0 1-1.06 0L4.22 6.78a.749.749 0 1 1 1.06-1.06l1.97 1.969Z"/></svg>
<div class="btn" style="left:1402px;top:88px;width:55px;height:28px"></div>
<div class="abs" style="left:1403px;top:89px;width:26px;height:26px;border-radius:5px 0 0 5px;background:#eff2f5"></div>
<div class="abs" style="left:1429px;top:89px;width:1px;height:26px;background:#d1d9e0"></div>
<svg class="ic" style="left:1408px;top:94px;width:16px;height:16px;fill:#59636e;" viewBox="0 0 16 16"><path d="M11.013 1.427a1.75 1.75 0 0 1 2.474 0l1.086 1.086a1.75 1.75 0 0 1 0 2.474l-8.61 8.61c-.21.21-.47.364-.756.445l-3.251.93a.75.75 0 0 1-.927-.928l.929-3.25c.081-.286.235-.547.445-.758l8.61-8.61Zm.176 4.823L9.75 4.81l-6.286 6.287a.253.253 0 0 0-.064.108l-.558 1.953 1.953-.558a.253.253 0 0 0 .108-.064Zm1.238-3.763a.25.25 0 0 0-.354 0L10.811 3.75l1.439 1.44 1.263-1.263a.25.25 0 0 0 0-.354Z"/></svg>
<svg class="ic" style="left:1435px;top:94px;width:16px;height:16px;fill:#59636e;" viewBox="0 0 16 16"><path d="m4.427 7.427 3.396 3.396a.25.25 0 0 0 .354 0l3.396-3.396A.25.25 0 0 0 11.396 7H4.604a.25.25 0 0 0-.177.427Z"/></svg>
<div class="abs" style="left:1464px;top:88px;width:28px;height:28px;border-radius:6px;background:#e6eaef"></div>
<svg class="ic" style="left:1470px;top:94px;width:16px;height:16px;fill:#59636e;" viewBox="0 0 16 16"><path d="M0 1.75C0 .784.784 0 1.75 0h12.5C15.216 0 16 .784 16 1.75v12.5A1.75 1.75 0 0 1 14.25 16H1.75A1.75 1.75 0 0 1 0 14.25Zm1.75-.25a.25.25 0 0 0-.25.25v12.5c0 .138.112.25.25.25h12.5a.25.25 0 0 0 .25-.25V1.75a.25.25 0 0 0-.25-.25Zm7.47 3.97a.75.75 0 0 1 1.06 0l2 2a.75.75 0 0 1 0 1.06l-2 2a.749.749 0 0 1-1.275-.326.749.749 0 0 1 .215-.734L10.69 8 9.22 6.53a.75.75 0 0 1 0-1.06ZM6.78 6.53 5.31 8l1.47 1.47a.749.749 0 0 1-.326 1.275.749.749 0 0 1-.734-.215l-2-2a.75.75 0 0 1 0-1.06l2-2a.751.751 0 0 1 1.042.018.751.751 0 0 1 .018 1.042Z"/></svg>

<div id="codevp">
<div class="ln" style="top:-6px"><span class="no">257</span><span class="cd">        <span class="k">except</span> <span class="o">Exception</span> <span class="k">as</span> e:</span></div>
<div class="ln" style="top:14px"><span class="no">258</span><span class="cd">            <span class="f">print</span>(<span class="s">f"Error during cleanup: {e}"</span>, file<span class="b">=</span>sys.<span class="b">stderr</span>)</span></div>
<div class="ln" style="top:34px"><span class="no">259</span><span class="cd">        <span class="k">finally</span>:</span></div>
<div class="ln" style="top:54px"><span class="no">260</span><span class="cd">            <span class="k">if</span> self.<span class="b">error_occurred</span>:</span></div>
<div class="ln" style="top:74px"><span class="no">261</span><span class="cd">                <span class="f">print</span>(<span class="s">"Exiting with error..."</span>, file<span class="b">=</span>sys.<span class="b">stderr</span>)</span></div>
<div class="ln" style="top:94px"><span class="no">262</span><span class="cd">                sys.<span class="b">exit</span>(<span class="b">1</span>)</span></div>
<div class="ln" style="top:114px"><span class="no">263</span><span class="cd">            <span class="k">else</span>:</span></div>
<div class="ln" style="top:134px"><span class="no">264</span><span class="cd">                <span class="f">print</span>(<span class="s">"Exiting..."</span>)</span></div>
<div class="ln" style="top:154px"><span class="no">265</span><span class="cd">                sys.<span class="b">exit</span>(<span class="b">0</span>)</span></div>
<div class="ln" style="top:174px"><span class="no">266</span><span class="cd"></span></div>
<div class="ln hlrow" style="top:194px"><span class="no">267</span><span class="cd"><span class="k">def</span> <span class="f hl">picamera_thread</span>(pipeline, video_width, video_height, video_format, picamera_config<span class="b">=None</span>):</span></div>
<div class="ln" style="top:214px"><span class="no">268</span><span class="cd">    appsrc <span class="b">=</span> pipeline.<span class="b">get_by_name</span>(<span class="s">"app_source"</span>)</span></div>
<div class="ln" style="top:234px"><span class="no">269</span><span class="cd">    appsrc.<span class="b">set_property</span>(<span class="s">"is-live"</span>, <span class="b">True</span>)</span></div>
<div class="ln" style="top:254px"><span class="no">270</span><span class="cd">    appsrc.<span class="b">set_property</span>(<span class="s">"format"</span>, <span class="o">Gst</span>.<span class="b">Format</span>.<span class="b">TIME</span>)</span></div>
<div class="ln" style="top:274px"><span class="no">271</span><span class="cd">    <span class="f">print</span>(<span class="s">"appsrc properties: "</span>, appsrc)</span></div>
<div class="ln" style="top:294px"><span class="no">272</span><span class="cd">    <span class="c"># Initialize Picamera2</span></span></div>
<div class="ln" style="top:314px"><span class="no">273</span><span class="cd">    <span class="k">with</span> <span class="f">Picamera2</span>() <span class="k">as</span> picam2:</span></div>
<div class="ln" style="top:334px"><span class="no">274</span><span class="cd">        <span class="k">if</span> picamera_config <span class="b">is</span> <span class="b">None</span>:</span></div>
<div class="ln" style="top:354px"><span class="no">275</span><span class="cd">            <span class="c"># Default configuration</span></span></div>
<div class="ln" style="top:374px"><span class="no">276</span><span class="cd">            main <span class="b">=</span> {<span class="s">'size'</span>: (<span class="b">1280</span>, <span class="b">720</span>), <span class="s">'format'</span>: <span class="s">'RGB888'</span>}</span></div>
<div class="ln" style="top:394px"><span class="no">277</span><span class="cd">            lores <span class="b">=</span> {<span class="s">'size'</span>: (video_width, video_height), <span class="s">'format'</span>: <span class="s">'RGB888'</span>}</span></div>
<div class="ln" style="top:414px"><span class="no">278</span><span class="cd">            controls <span class="b">=</span> {<span class="s">'FrameRate'</span>: <span class="b">30</span>}</span></div>
<div class="ln" style="top:434px"><span class="no">279</span><span class="cd">            config <span class="b">=</span> picam2.<span class="b">create_preview_configuration</span>(main<span class="b">=</span>main, lores<span class="b">=</span>lores, controls<span class="b">=</span>controls)</span></div>
<div class="ln" style="top:454px"><span class="no">280</span><span class="cd">        <span class="k">else</span>:</span></div>
<div class="ln" style="top:474px"><span class="no">281</span><span class="cd">            config <span class="b">=</span> picamera_config</span></div>
<div class="ln" style="top:494px"><span class="no">282</span><span class="cd">        <span class="c"># Configure the camera with the created configuration</span></span></div>
<div class="ln" style="top:514px"><span class="no">283</span><span class="cd">        picam2.<span class="b">configure</span>(config)</span></div>
<div class="ln" style="top:534px"><span class="no">284</span><span class="cd">        <span class="c"># Update GStreamer caps based on 'lores' stream</span></span></div>
<div class="ln" style="top:554px"><span class="no">285</span><span class="cd">        lores_stream <span class="b">=</span> config[<span class="s">'lores'</span>]</span></div>
<div class="ln" style="top:574px"><span class="no">286</span><span class="cd">        format_str <span class="b">=</span> <span class="s">'RGB'</span> <span class="k">if</span> lores_stream[<span class="s">'format'</span>] <span class="b">==</span> <span class="s">'RGB888'</span> <span class="k">else</span> video_format</span></div>
<div class="ln" style="top:594px"><span class="no">287</span><span class="cd">        width, height <span class="b">=</span> lores_stream[<span class="s">'size'</span>]</span></div>
<div class="ln" style="top:614px"><span class="no">288</span><span class="cd">        <span class="f">print</span>(<span class="s">f"Picamera2 configuration: width={width}, height={height}, format={format_str}"</span>)</span></div>
<div class="ln" style="top:634px"><span class="no">289</span><span class="cd">        appsrc.<span class="b">set_property(</span></span></div>
<div class="ln" style="top:654px"><span class="no">290</span><span class="cd">            <span class="s">"caps"</span>,</span></div>
<div class="ln" style="top:674px"><span class="no">291</span><span class="cd">            <span class="o">Gst</span>.<span class="b">Caps</span>.<span class="b">from_string(</span></span></div>
<div class="ln" style="top:694px"><span class="no">292</span><span class="cd">                <span class="s">f"video/x-raw, format={format_str}, width={width}, height={height}, "</span></span></div>
<div class="ln" style="top:714px"><span class="no">293</span><span class="cd">                <span class="s">f"framerate=30/1, pixel-aspect-ratio=1/1"</span></span></div>
<div class="ln" style="top:734px"><span class="no">294</span><span class="cd">            )</span></div>
<div class="ln" style="top:754px"><span class="no">295</span><span class="cd">        )</span></div>
<div class="ln" style="top:774px"><span class="no">296</span><span class="cd">        picam2.<span class="b">start</span>()</span></div>
<div class="ln" style="top:794px"><span class="no">297</span><span class="cd">        frame_count <span class="b">=</span> <span class="b">0</span></span></div>
<div class="ln" style="top:814px"><span class="no">298</span><span class="cd">        start_time <span class="b">=</span> time.<span class="b">time</span>()</span></div>
  <div class="btn" style="left:5px;top:192px;width:24px;height:24px"></div>
  <svg class="ic" style="left:9px;top:196px;width:16px;height:16px;fill:#59636e;" viewBox="0 0 16 16"><path d="M8 9a1.5 1.5 0 1 0 0-3 1.5 1.5 0 0 0 0 3ZM1.5 9a1.5 1.5 0 1 0 0-3 1.5 1.5 0 0 0 0 3Zm13 0a1.5 1.5 0 1 0 0-3 1.5 1.5 0 0 0 0 3Z"/></svg>
  <svg class="ic" style="left:64px;top:196px;width:16px;height:16px;fill:#59636e;" viewBox="0 0 16 16"><path d="M12.78 5.22a.749.749 0 0 1 0 1.06l-4.25 4.25a.749.749 0 0 1-1.06 0L3.22 6.28a.749.749 0 1 1 1.06-1.06L8 8.939l3.72-3.719a.749.749 0 0 1 1.06 0Z"/></svg>
  <div class="abs" style="left:92px;top:194px;width:2px;height:20px;background:#000"></div>
  <svg class="ic" style="left:140px;top:380px;width:500px;height:60px" viewBox="0 0 500 60"><path d="M24.800 14.300Q244 13.600 465.300 12.500" fill="none" stroke="#ff0000" stroke-width="3" stroke-linecap="round"/><path d="M18 50.200Q150 50.800 291.300 51.400" fill="none" stroke="#ff0000" stroke-width="2.800" stroke-linecap="round"/></svg>
</div>

<!-- ===== symbols pane ===== -->
<div id="sym">
  <div class="band" style="top:120px;height:37px"></div>
  <div class="band" style="top:221px;height:37px"></div>
  <div class="abs" style="left:0;top:322px;width:383px;height:1px;background:#d1d9e0"></div>
</div>
<svg class="ic" style="left:1535px;top:51px;width:16px;height:16px;fill:#59636e;" viewBox="0 0 16 16"><path d="M7.78 12.53a.75.75 0 0 1-1.06 0L2.47 8.28a.75.75 0 0 1 0-1.06l4.25-4.25a.751.751 0 0 1 1.042.018.751.751 0 0 1 .018 1.042L4.81 7h7.44a.75.75 0 0 1 0 1.5H4.81l2.97 2.97a.75.75 0 0 1 0 1.06Z"/></svg>
<div class="t12" style="left:1555px;top:49px">All Symbols</div>
<svg class="ic" style="left:1869px;top:51px;width:16px;height:16px;fill:#1f2328;" viewBox="0 0 16 16"><path d="M3.72 3.72a.75.75 0 0 1 1.06 0L8 6.94l3.22-3.22a.749.749 0 0 1 1.275.326.749.749 0 0 1-.215.734L9.06 8l3.22 3.22a.749.749 0 0 1-.326 1.275.749.749 0 0 1-.734-.215L8 9.06l-3.22 3.22a.751.751 0 0 1-1.042-.018.751.751 0 0 1-.018-1.042L6.94 8 3.72 4.78a.75.75 0 0 1 0-1.06Z"/></svg>
<div class="abs lmono" style="left:1534px;top:83px;width:78px;height:24px;line-height:26px;border-radius:6px;background:#efebf8;color:#6639ba;font-size:13px;font-weight:bold;text-align:center">function</div>
<div class="abs lmono" style="left:1534px;top:118px;height:21px;line-height:21px;font-size:14px;color:#6639ba">picamera_thread</div>
<div class="t12" style="left:1534px;top:164px">Definition</div>
<div class="t12" style="left:1591.500px;top:164px">Search</div>
<div class="t12" style="left:1542px;top:199px">In this file</div>
<div class="abs gs" style="left:1518px;top:230px;width:379px;height:20px;overflow:hidden">
  <div class="t12 mono" style="left:13.600px;top:0;color:#59636e">267</div>
  <div class="t12 mono" style="left:45.300px;top:0;color:#0969da;white-space:pre;letter-spacing:-0.0244px">def <span class="hl">picamera_thread</span>(pipeline, video_width, video_height, video_format, picamera_config=None):</div>
  
</div>
<div class="t12" style="left:1534px;top:265px">1 Reference</div>
<div class="t12" style="left:1607px;top:265px">Search</div>
<svg class="ic" style="left:1833px;top:266px;width:16px;height:16px;fill:#59636e;" viewBox="0 0 16 16"><path d="M3.22 10.53a.749.749 0 0 1 0-1.06l4.25-4.25a.749.749 0 0 1 1.06 0l4.25 4.25a.749.749 0 1 1-1.06 1.06L8 6.811 4.28 10.53a.749.749 0 0 1-1.06 0Z"/></svg>
<svg class="ic" style="left:1869px;top:266px;width:16px;height:16px;fill:#59636e;" viewBox="0 0 16 16"><path d="M12.78 5.22a.749.749 0 0 1 0 1.06l-4.25 4.25a.749.749 0 0 1-1.06 0L3.22 6.28a.749.749 0 1 1 1.06-1.06L8 8.939l3.72-3.719a.749.749 0 0 1 1.06 0Z"/></svg>
<svg class="ic" style="left:1534px;top:301px;width:16px;height:16px;fill:#59636e;" viewBox="0 0 16 16"><path d="M12.78 5.22a.749.749 0 0 1 0 1.06l-4.25 4.25a.749.749 0 0 1-1.06 0L3.22 6.28a.749.749 0 1 1 1.06-1.06L8 8.939l3.72-3.719a.749.749 0 0 1 1.06 0Z"/></svg>
<div class="t12" style="left:1558px;top:300px">In this file</div>
<div class="abs gs" style="left:1518px;top:331px;width:379px;height:20px;overflow:hidden">
  <div class="t12 mono" style="left:13.600px;top:0;color:#59636e">227</div>
  <div class="t12 mono" style="left:45.300px;top:0;color:#0969da;white-space:pre;letter-spacing:-0.0244px"><span class="hl">picamera_thread</span>, args=(self.pipeline, self.video_width, self.video_height, self.video_format, self.picamera_config))</div>
  
</div>
<svg class="ic" style="left:1535px;top:372px;width:16px;height:16px;fill:#59636e;" viewBox="0 0 16 16"><path d="M10.68 11.74a6 6 0 0 1-7.922-8.982 6 6 0 0 1 8.982 7.922l3.04 3.04a.749.749 0 0 1-.326 1.275.749.749 0 0 1-.734-.215ZM11.5 7a4.499 4.499 0 1 0-8.997 0A4.499 4.499 0 0 0 11.5 7Z"/></svg>
<div class="t12" style="left:1555px;top:370px;color:#1f2328">Search for this symbol</div>

<!-- ===== scrollbar markers ===== -->
<div class="abs" style="left:1903px;top:628px;width:12px;height:2px;background:#9a6700"></div>
<div class="abs" style="left:1903px;top:732px;width:12px;height:2px;background:#9a6700"></div>
<div class="abs" style="left:1913.600px;top:704px;width:1.400px;height:106px;background:#7f8186"></div>
<div id="bottomline"></div>
<div id="bottomband"></div>
</body>
</html>
